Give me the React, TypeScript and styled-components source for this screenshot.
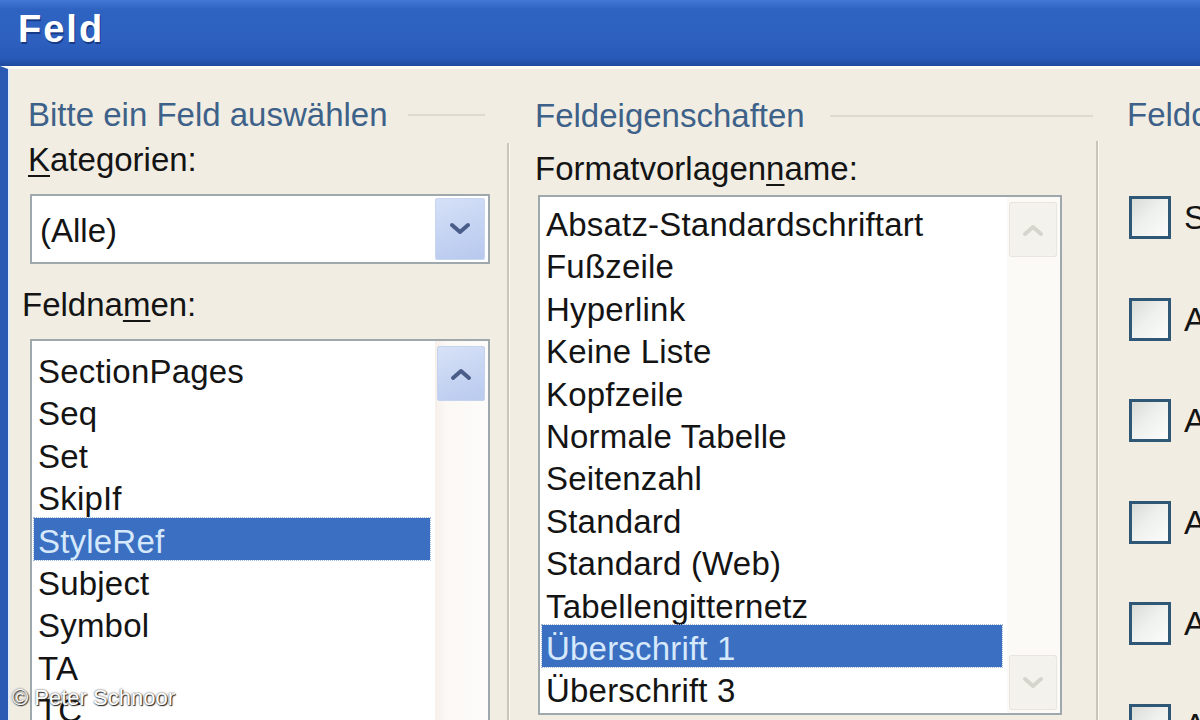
import styled, { createGlobalStyle } from 'styled-components';

const GlobalStyle = createGlobalStyle`
  html, body {
    margin: 0;
    padding: 0;
  }
  body {
    width: 1200px;
    height: 720px;
    overflow: hidden;
    background: #f1ede2;
    font-family: 'Liberation Sans', Arial, sans-serif;
  }
`;

const Window = styled.div`
  position: relative;
  width: 1200px;
  height: 720px;
  display: flex;
  flex-direction: column;
  overflow: hidden;
`;

const TitleBar = styled.div`
  flex: none;
  height: 66px;
  box-sizing: border-box;
  padding: 0 0 8px 18px;
  display: flex;
  align-items: center;
  background: linear-gradient(
    180deg,
    #4279d6 0%,
    #2f63c2 14%,
    #2d60bf 60%,
    #2759b8 88%,
    #1e4b9f 100%
  );
`;

const Title = styled.h1`
  margin: 0;
  font-family: 'Liberation Sans', Arial, sans-serif;
  font-size: 38px;
  font-weight: bold;
  letter-spacing: 2px;
  color: #fff;
  text-shadow: 1px 2px 0 #163a86;
`;

const Frame = styled.div`
  flex: 1;
  min-height: 0;
  display: flex;
  border-left: 8px solid #2a5ab4;
  border-top: 3px solid #fbf9f4;
  box-shadow: inset 2px 0 0 #e4ecf8;
`;

const Section = styled.section<{ $width: number }>`
  flex: none;
  width: ${(p) => p.$width}px;
  display: flex;
  flex-direction: column;
`;

const GroupHeader = styled.div<{ $indent: number; $end: number; $lineGap: number }>`
  display: flex;
  align-items: center;
  height: 40px;
  margin-top: 27px;
  padding-left: ${(p) => p.$indent}px;
  padding-right: ${(p) => p.$end}px;
  font-size: 33px;
  color: #3d6189;
  white-space: nowrap;
  &::after {
    content: '';
    flex: 1;
    height: 2px;
    margin-left: ${(p) => p.$lineGap}px;
    background: #dedad0;
  }
`;

const Pane = styled.div<{ $divider?: boolean; $indent: number }>`
  flex: 1;
  display: flex;
  flex-direction: column;
  margin-top: 7px;
  padding-left: ${(p) => p.$indent}px;
  border-left: ${(p) => (p.$divider ? '2px solid #c9c5b9' : 'none')};
  box-shadow: ${(p) => (p.$divider ? 'inset 1px 0 0 #fbfaf6' : 'none')};
`;

const Label = styled.div<{ $top: number; $shift?: number }>`
  margin-top: ${(p) => p.$top}px;
  margin-left: ${(p) => p.$shift ?? 0}px;
  padding-top: 2px;
  line-height: 34px;
  font-size: 33px;
  color: #141414;
  white-space: nowrap;
  u {
    text-decoration-thickness: 2px;
    text-underline-offset: 4px;
  }
`;

const Combo = styled.div`
  box-sizing: border-box;
  width: 460px;
  height: 70px;
  margin: 17px 0 0 2px;
  padding: 2px 3px 2px 8px;
  display: flex;
  align-items: center;
  background: #fff;
  border: 2px solid #9ea8ad;
`;

const ComboValue = styled.span`
  flex: 1;
  padding-top: 4px;
  font-size: 33px;
  color: #141414;
`;

const DropButton = styled.div`
  width: 50px;
  align-self: stretch;
  display: flex;
  align-items: center;
  justify-content: center;
  border-radius: 3px;
  background: linear-gradient(160deg, #d6e1f8 0%, #c4d3f2 55%, #b7c8ee 100%);
  box-shadow: inset 0 0 0 1px #c9d6f0;
`;

const ListBox = styled.div<{ $width: number; $height: number; $top: number; $left: number }>`
  box-sizing: border-box;
  width: ${(p) => p.$width}px;
  height: ${(p) => p.$height}px;
  margin: ${(p) => p.$top}px 0 0 ${(p) => p.$left}px;
  flex: none;
  display: flex;
  background: #fff;
  border: 2px solid #9ea8ad;
  overflow: hidden;
`;

const Items = styled.ul<{ $padTop: number }>`
  flex: 1;
  min-width: 0;
  margin: 0;
  padding: ${(p) => p.$padTop}px 5px 0 2px;
  list-style: none;
`;

const Item = styled.li<{ $selected?: boolean }>`
  box-sizing: border-box;
  height: 42.4px;
  line-height: 42.4px;
  padding: 3px 0 0 4px;
  font-size: 33px;
  letter-spacing: 0.2px;
  white-space: nowrap;
  color: ${(p) => (p.$selected ? '#d6e8fb' : '#141414')};
  background: ${(p) => (p.$selected ? '#3a6fc1' : 'transparent')};
  outline: ${(p) => (p.$selected ? '1px dotted #9fb9dc' : 'none')};
`;

const ScrollBar = styled.div<{ $disabled?: boolean }>`
  flex: none;
  width: 53px;
  box-sizing: border-box;
  padding: 5px 3px 3px 2px;
  display: flex;
  flex-direction: column;
  justify-content: space-between;
  background: ${(p) =>
    p.$disabled
      ? '#fbfaf7'
      : 'linear-gradient(90deg, #f7efe9 0%, #fbf8f5 20%, #fdfcfa 100%)'};
`;

const ScrollButton = styled.div<{ $disabled?: boolean }>`
  height: 55px;
  display: flex;
  align-items: center;
  justify-content: center;
  border-radius: 3px;
  background: ${(p) =>
    p.$disabled
      ? '#f3f2ed'
      : 'linear-gradient(160deg, #d8e3f8 0%, #c6d4f2 55%, #b9caee 100%)'};
  box-shadow: inset 0 0 0 1px ${(p) => (p.$disabled ? '#e7e5dd' : '#c5d3ef')};
`;

const CheckList = styled.div`
  padding-top: 55px;
  display: flex;
  flex-direction: column;
`;

const CheckRow = styled.div`
  height: 101.5px;
  display: flex;
  align-items: flex-start;
  gap: 13px;
  font-size: 33px;
  color: #141414;
  white-space: nowrap;
  line-height: 44px;
`;

const CheckBox = styled.span`
  flex: none;
  box-sizing: border-box;
  width: 42px;
  height: 43px;
  border: 3px solid #2f5776;
  background: linear-gradient(135deg, #d9dbd6 0%, #eef0ee 45%, #fbfcfb 100%);
`;

const Watermark = styled.div`
  position: absolute;
  left: 12px;
  bottom: 10px;
  font-family: 'Liberation Sans', Arial, sans-serif;
  font-size: 22px;
  line-height: 24px;
  color: #fff;
  text-shadow: 0 0 2px #333, 1px 1px 1px #222;
`;

const Chevron = ({ up, color }: { up?: boolean; color: string }) => (
  <svg width="22" height="14" viewBox="0 0 22 14">
    <polyline
      points={up ? '3,11 11,4 19,11' : '3,3 11,10 19,3'}
      fill="none"
      stroke={color}
      strokeWidth="4"
      strokeLinejoin="round"
      strokeLinecap="round"
    />
  </svg>
);

const fieldNames = ['SectionPages', 'Seq', 'Set', 'SkipIf', 'StyleRef', 'Subject', 'Symbol', 'TA', 'TC'];

const styleNames = [
  'Absatz-Standardschriftart',
  'Fußzeile',
  'Hyperlink',
  'Keine Liste',
  'Kopfzeile',
  'Normale Tabelle',
  'Seitenzahl',
  'Standard',
  'Standard (Web)',
  'Tabellengitternetz',
  'Überschrift 1',
  'Überschrift 3',
];

const options = [
  'Seite von unten nach oben durchsuchen',
  'Absatznummer einfügen',
  'Absatzposition einfügen',
  'Alle Nicht-Trennzeichen unterdrücken',
  'Absatznummer ohne Kontext einfügen',
  'Absatznummer mit vollständigem Kontext',
];

const App = () => {
  return (
    <Window>
      <GlobalStyle />
      <TitleBar>
        <Title>Feld</Title>
      </TitleBar>
      <Frame>
        <Section $width={499}>
          <GroupHeader $indent={20} $end={22} $lineGap={20}>
            Bitte ein Feld auswählen
          </GroupHeader>
          <Pane $indent={20}>
            <Label $top={0}>
              <u>K</u>ategorien:
            </Label>
            <Combo>
              <ComboValue>(Alle)</ComboValue>
              <DropButton>
                <Chevron color="#4a5d88" />
              </DropButton>
            </Combo>
            <Label $top={22} $shift={-6}>
              Feldna<u>m</u>en:
            </Label>
            <ListBox $width={460} $height={420} $top={17} $left={2}>
              <Items $padTop={7}>
                {fieldNames.map((name) => (
                  <Item key={name} $selected={name === 'StyleRef'}>
                    {name}
                  </Item>
                ))}
              </Items>
              <ScrollBar>
                <ScrollButton>
                  <Chevron up color="#4a5d88" />
                </ScrollButton>
              </ScrollBar>
            </ListBox>
          </Pane>
        </Section>
        <Section $width={589}>
          <GroupHeader $indent={28} $end={3} $lineGap={25}>
            Feldeigenschaften
          </GroupHeader>
          <Pane $divider $indent={26}>
            <Label $top={7}>
              Formatvorlagen<u>n</u>ame:
            </Label>
            <ListBox $width={524} $height={520} $top={9} $left={3}>
              <Items $padTop={4}>
                {styleNames.map((name) => (
                  <Item key={name} $selected={name === 'Überschrift 1'}>
                    {name}
                  </Item>
                ))}
              </Items>
              <ScrollBar $disabled>
                <ScrollButton $disabled>
                  <Chevron up color="#d6d5cd" />
                </ScrollButton>
                <ScrollButton $disabled>
                  <Chevron color="#d6d5cd" />
                </ScrollButton>
              </ScrollBar>
            </ListBox>
          </Pane>
        </Section>
        <Section $width={400}>
          <GroupHeader $indent={31} $end={0} $lineGap={20}>
            Feldoptionen
          </GroupHeader>
          <Pane $divider $indent={31}>
            <CheckList>
              {options.map((option) => (
                <CheckRow key={option}>
                  <CheckBox />
                  {option}
                </CheckRow>
              ))}
            </CheckList>
          </Pane>
        </Section>
      </Frame>
      <Watermark>© Peter Schnoor</Watermark>
    </Window>
  );
};

export default App;
